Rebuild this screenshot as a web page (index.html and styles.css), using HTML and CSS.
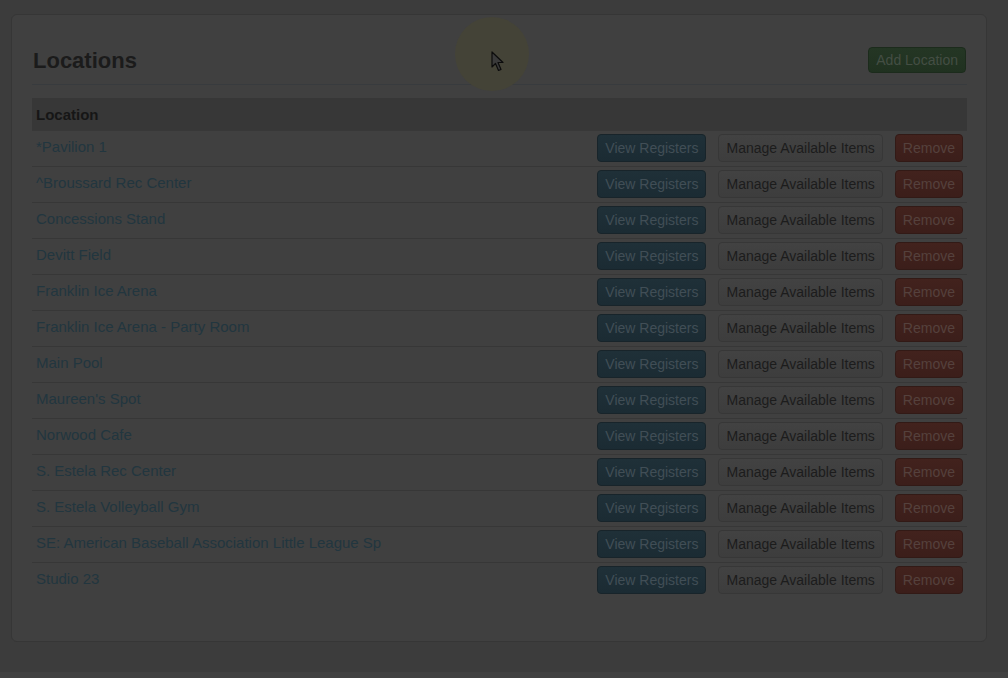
FILE: index.html
```html
<!DOCTYPE html>
<html lang="en">
<head>
    <meta charset="UTF-8">
    <meta name="viewport" content="width=device-width, initial-scale=1.0">
    <title>Locations</title>
    <link rel="stylesheet" href="styles.css">
</head>
<body>
    <div class="page">
        <div class="well">
            <div class="page-header">
                <h2>Locations</h2>
                <a class="btn btn-success" href="#">Add Location</a>
            </div>

            <table class="table">
                <thead>
                    <tr><th colspan="2">Location</th></tr>
                </thead>
                <tbody id="rows"></tbody>
            </table>
        </div>
    </div>
    <div class="footer-strip"></div>

    <div class="cursor-spot">
        <svg class="cursor" width="14" height="22" viewBox="0 0 14 22">
            <path d="M1 1 L1 16 L4.5 12.5 L7.5 19.5 L10 18.5 L7 11.5 L12 11.5 Z" fill="#3a3a3a" stroke="#0c0c0c" stroke-width="1.2" stroke-linejoin="round"/>
        </svg>
    </div>

    <script>
        var locations = [
            '*Pavilion 1',
            '^Broussard Rec Center',
            'Concessions Stand',
            'Devitt Field',
            'Franklin Ice Arena',
            'Franklin Ice Arena - Party Room',
            'Main Pool',
            "Maureen's Spot",
            'Norwood Cafe',
            'S. Estela Rec Center',
            'S. Estela Volleyball Gym',
            'SE: American Baseball Association Little League Sp',
            'Studio 23'
        ];

        var tbody = document.getElementById('rows');
        locations.forEach(function(name) {
            var tr = document.createElement('tr');
            tr.innerHTML =
                '<td><a class="loc-link" href="#">' + name + '</a></td>' +
                '<td class="actions">' +
                    '<a class="btn btn-info" href="#">View Registers</a>' +
                    '<a class="btn" href="#">Manage Available Items</a>' +
                    '<a class="btn btn-danger" href="#">Remove</a>' +
                '</td>';
            tbody.appendChild(tr);
        });
    </script>
</body>
</html>
```

FILE: styles.css
```css
body {
    margin: 0;
    background-color: #3c3c3c;
    font-family: "Liberation Sans", Arial, sans-serif;
    font-size: 14px;
    color: #1a1a1a;
}
.page {
    padding: 14px 21px 0 11px;
}
.well {
    background-color: #404040;
    border: 1px solid #363636;
    border-radius: 6px;
    padding: 0 19px 43px 20px;
}
.page-header {
    display: flex;
    justify-content: space-between;
    align-items: flex-end;
    box-sizing: border-box;
    height: 70px;
    padding-bottom: 11px;
    border-bottom: 1px solid #383b3e;
    margin-bottom: 13px;
}
.page-header h2 {
    margin: 0 0 -1px 1px;
    font-size: 22px;
    line-height: 26px;
    font-weight: bold;
    color: #1b1b1b;
}
.page-header .btn {
    margin-right: 1px;
    height: 26px;
    line-height: 24px;
}
.table {
    width: 100%;
    border-collapse: collapse;
}
.table th {
    background-color: #373737;
    text-align: left;
    font-size: 15px;
    font-weight: bold;
    color: #161616;
    height: 32px;
    padding: 0 4px;
    border-bottom: 1px solid #383838;
}
.table td {
    height: 35px;
    padding: 0 4px;
    border-bottom: 1px solid #373737;
    vertical-align: middle;
}
.table tr:last-child td {
    border-bottom: none;
}
.loc-link {
    display: inline-block;
    margin-bottom: 4px;
    color: #22363f;
    font-size: 15px;
    text-decoration: none;
}
.actions {
    text-align: right;
    white-space: nowrap;
}
.actions .btn {
    margin-left: 12px;
    margin-bottom: 2px;
}
.btn {
    display: inline-block;
    box-sizing: border-box;
    height: 28px;
    line-height: 26px;
    padding: 0 7px;
    font-size: 14px;
    text-decoration: none;
    border-radius: 4px;
    border: 1px solid #373737;
    background: linear-gradient(#424242, #3d3d3d);
    color: #1c1c1c;
    vertical-align: middle;
}
.btn-info {
    background: linear-gradient(#1f3038, #1b2b33);
    border-color: #18242a;
    color: #414e56;
}
.btn-danger {
    background: linear-gradient(#42221d, #3b1e1a);
    border-color: #321a16;
    color: #55413d;
}
.btn-success {
    background: linear-gradient(#243624, #203120);
    border-color: #1c2b1c;
    color: #444e44;
}
.footer-strip {
    position: fixed;
    left: 0;
    right: 0;
    bottom: 0;
    height: 6px;
    background-color: #414141;
}
.cursor-spot {
    position: absolute;
    left: 455px;
    top: 17px;
    width: 74px;
    height: 74px;
    border-radius: 50%;
    background-color: #444337;
}
.cursor {
    position: absolute;
    left: 36px;
    top: 34px;
}
```
